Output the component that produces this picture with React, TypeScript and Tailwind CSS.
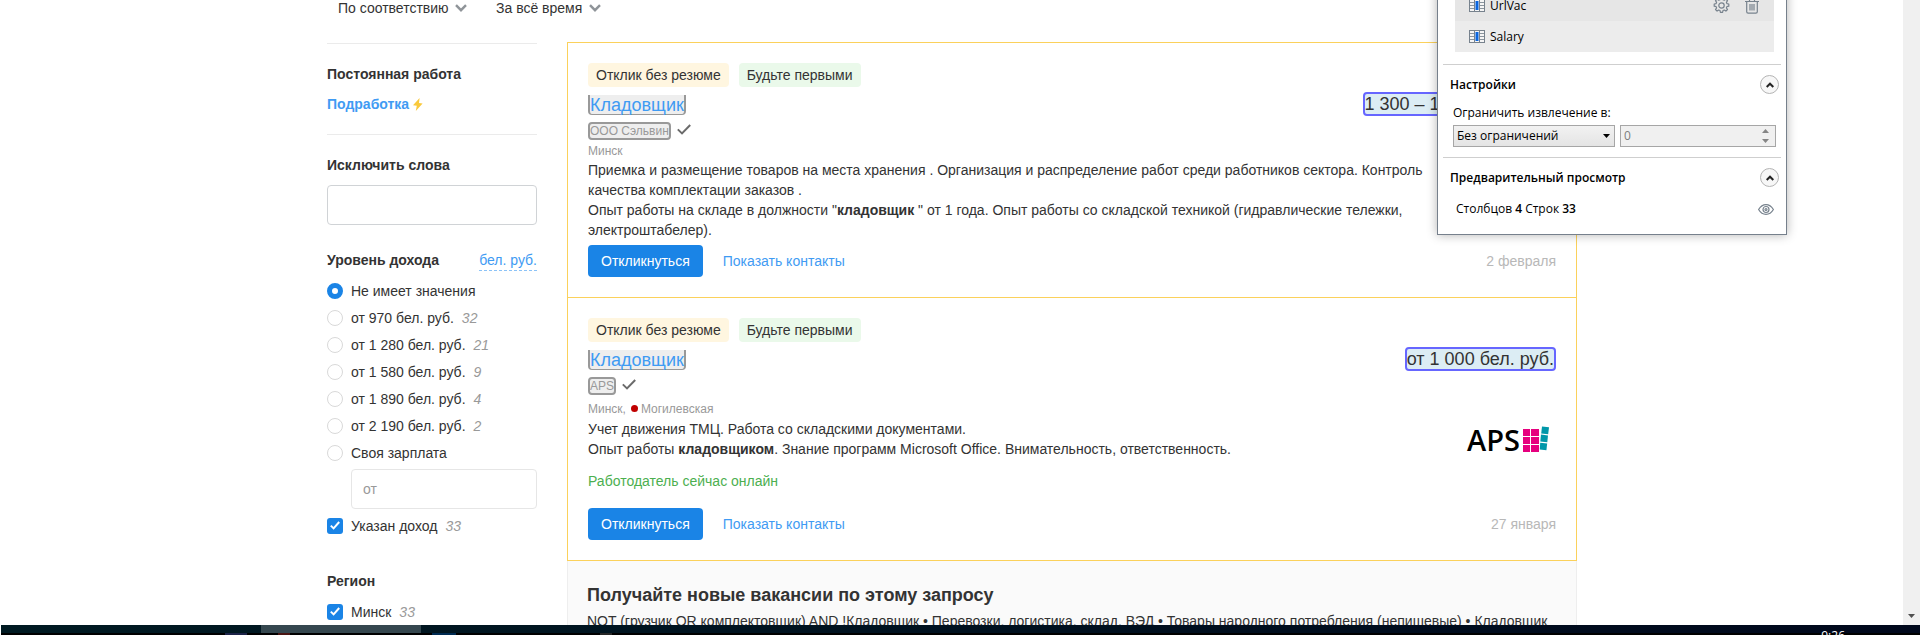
import type { ReactNode } from 'react';

const ARIAL = "font-['Liberation_Sans',Arial,sans-serif]";
const SEGOE = "font-['Open_Sans','Noto_Sans',sans-serif]";

function Chevron() {
  return (
    <svg width="12" height="8" viewBox="0 0 12 8" fill="none" stroke="#8f9499" strokeWidth="2.400" aria-hidden="true">
      <path d="M1 1.200 6 6.200 11 1.200" />
    </svg>
  );
}

function Sort({ label, value }: { label: string; value: string }) {
  return (
    <label className="flex h-4 items-center gap-1.5">
      <select aria-label={label} className="appearance-none bg-transparent p-0 text-sm leading-4 text-[#333]">
        <option>{value}</option>
      </select>
      <Chevron />
    </label>
  );
}

function RadioRow({ text, count, checked }: { text: string; count?: string; checked?: boolean }) {
  return (
    <label className="flex h-[27px] items-center">
      <input
        type="radio"
        name="income"
        defaultChecked={checked}
        className="mr-2 size-4 appearance-none rounded-full border border-[#d9d9d9] bg-white checked:border-[5px] checked:border-[#1a84e6]"
      />
      <span>{text}</span>
      {count && <i className="ml-2 text-[#999]">{count}</i>}
    </label>
  );
}

function CheckRow({ text, count }: { text: string; count: string }) {
  return (
    <label className="flex h-[27px] items-center">
      <span className="mr-2 grid size-4 place-items-center">
        <input type="checkbox" defaultChecked className="col-start-1 row-start-1 size-4 appearance-none rounded-[3px] bg-[#1a84e6]" />
        <svg className="pointer-events-none col-start-1 row-start-1" width="10" height="9" viewBox="0 0 10 9" fill="none" stroke="#fff" strokeWidth="2" aria-hidden="true">
          <path d="M.8 4.6 3.6 7.4 9.2 1" />
        </svg>
      </span>
      <span>{text}</span>
      <i className="ml-2 text-[#999]">{count}</i>
    </label>
  );
}

function Sidebar() {
  return (
    <aside className="mt-px w-[210px] shrink-0 border-t border-[#ebebeb] pt-5 text-sm text-[#333]">
      <h3 className="font-bold">Постоянная работа</h3>
      <a href="#part" className="mt-2.5 flex items-center gap-1 font-bold text-[#3f9bf3]">
        Подработка
        <svg width="10" height="13" viewBox="0 0 10 13" fill="#f9c93c" aria-hidden="true">
          <path d="M6.6 0 0 7.2l3.8.6L2.8 13 9.6 5.5 6 5z" />
        </svg>
      </a>
      <div className="mt-5 border-t border-[#ebebeb] pt-5">
        <label htmlFor="exclude" className="block font-bold">Исключить слова</label>
        <input id="exclude" type="text" className="mt-2.5 block h-10 w-full rounded border border-[#d0d3d6] px-3" />
      </div>
      <div className="mt-[25px] flex justify-between">
        <h3 className="font-bold">Уровень дохода</h3>
        <a href="#currency" className="border-b border-dashed border-[#8cc3f7] text-[#3f9bf3]">бел. руб.</a>
      </div>
      <div className="mt-1.5">
        <RadioRow text="Не имеет значения" checked />
        <RadioRow text="от 970 бел. руб." count="32" />
        <RadioRow text="от 1 280 бел. руб." count="21" />
        <RadioRow text="от 1 580 бел. руб." count="9" />
        <RadioRow text="от 1 890 бел. руб." count="4" />
        <RadioRow text="от 2 190 бел. руб." count="2" />
        <RadioRow text="Своя зарплата" />
      </div>
      <div className="my-[3px] pl-6">
        <input type="text" aria-label="Своя зарплата" placeholder="от" className="block h-10 w-full rounded border border-[#e6e6e6] px-[11px] placeholder:text-[#999]" />
      </div>
      <CheckRow text="Указан доход" count="33" />
      <h3 className="mt-8 mb-[7px] font-bold">Регион</h3>
      <CheckRow text="Минск" count="33" />
    </aside>
  );
}

type Job = {
  salary: string;
  company: string;
  place: ReactNode;
  text: ReactNode;
  date: string;
  logo?: ReactNode;
  online?: boolean;
  last?: boolean;
};

function JobCard({ salary, company, place, text, date, logo, online, last }: Job) {
  return (
    <article className={`border-x border-t border-[#fbd15b] px-5 py-5 ${last ? 'border-b' : ''}`}>
      <div className="flex gap-2.5">
        <span className="flex h-6 items-center rounded bg-[#fff6e0] px-2">Отклик без резюме</span>
        <span className="flex h-6 items-center rounded bg-[#eaf9ea] px-2">Будьте первыми</span>
      </div>
      <div className="mt-[5px] flex h-6 items-start justify-between text-lg">
        <a href="#job" className="mt-[3px] flex h-5 items-center rounded-b border-x-2 border-b border-[#999] bg-[#eee] leading-5 text-[#3f9bf3]">
          Кладовщик
        </a>
        <span className="flex h-6 items-center rounded border-2 border-[#6666ff] bg-[#dcedf4] leading-5">{salary}</span>
      </div>
      <div className="mt-1.5 flex h-[18px] items-center gap-1.5 text-xs">
        <a href="#company" className="flex h-[18px] items-center rounded border-2 border-[#999] bg-[#eee] text-[#999]">{company}</a>
        <svg width="14" height="11" viewBox="0 0 14 11" fill="none" stroke="#6b6b6b" strokeWidth="2" aria-label="Проверен" className="mb-1">
          <path d="M.8 5.4 5 9.4 13.2 1" />
        </svg>
      </div>
      {place}
      <div className="flex items-center justify-between">
        <p className="max-w-[860px]">{text}</p>
        {logo}
      </div>
      {online && <p className="mt-3 text-[#4caf50]">Работодатель сейчас онлайн</p>}
      <div className={`flex items-center gap-5 ${online ? 'mt-[17px]' : 'mt-[5px]'}`}>
        <button type="button" className="h-8 rounded bg-[#1a84e6] px-[13px] text-white">Откликнуться</button>
        <a href="#contacts" className="text-[#3f9bf3]">Показать контакты</a>
        <time className="ml-auto text-[#b8b8b8]">{date}</time>
      </div>
    </article>
  );
}

function ApsLogo() {
  return (
    <svg width="83" height="28" viewBox="0 0 83 28" className="mr-[7px] shrink-0" aria-label="APS">
      <text x="1" y="26" fontSize="29" className="font-['Open_Sans','Noto_Sans',sans-serif] font-semibold" fill="#000">APS</text>
      <g fill="#e6007e">
        <rect x="57" y="4" width="7" height="7" />
        <rect x="65" y="4" width="8" height="7" />
        <rect x="57" y="12" width="7" height="7" />
        <rect x="65" y="12" width="8" height="7" />
        <rect x="57" y="20" width="7" height="7" />
        <rect x="65" y="20" width="8" height="7" />
      </g>
      <g fill="#0097a9">
        <path d="M76 1.400 83 2.200 82.200 9.200 75.200 8.400z" />
        <path d="M75 9.600 82 10.400 81.300 17.200 74.300 16.400z" />
        <path d="M74.200 17.700 81.200 18.500 80.400 25.200 73.800 24.500z" />
      </g>
    </svg>
  );
}

function ColumnIcon() {
  return (
    <svg width="16" height="13" viewBox="0 0 16 13" aria-hidden="true">
      <rect x=".5" y=".5" width="15" height="12" fill="#f5f5f5" stroke="#77828d" />
      <path d="M5.500 0v13M10.500 0v13" stroke="#77828d" />
      <path d="M1 3.500h4M1 6.500h4M1 9.500h4M11 3.500h4M11 6.500h4M11 9.500h4" stroke="#8b959e" />
      <rect x="6.500" y="2" width="3" height="9" fill="#0a66e0" />
    </svg>
  );
}

function GearIcon() {
  return (
    <svg width="17" height="17" viewBox="0 0 17 17" fill="none" stroke="#77828d" aria-hidden="true">
      <circle cx="8.500" cy="8.500" r="2.700" strokeWidth="1.200" />
      <path
        strokeWidth="1.200"
        strokeLinejoin="round"
        d="M7.400.8h2.200l.4 1.900 1.300.5 1.600-1.100 1.600 1.600-1.100 1.600.5 1.300 1.900.4v2.200l-1.900.4-.5 1.300 1.100 1.600-1.600 1.600-1.600-1.100-1.300.5-.4 1.900H7.400L7 13.500 5.700 13l-1.600 1.100-1.600-1.600 1.100-1.600-.5-1.300-1.900-.4V7l1.900-.4.5-1.300-1.100-1.600 1.600-1.600 1.600 1.100L7 2.700z"
      />
    </svg>
  );
}

function TrashIcon() {
  return (
    <svg width="14" height="16" viewBox="0 0 14 16" fill="none" stroke="#77828d" strokeWidth="1.200" aria-hidden="true">
      <path d="M0 3.500h14M4.500 3V1h5v2M1.700 3.500v10.300q0 1.400 1.400 1.400h7.800q1.400 0 1.400-1.400V3.500M5 6v6.500M7 6v6.500M9 6v6.500" />
    </svg>
  );
}

function SectionHead({ title }: { title: string }) {
  return (
    <div className="mt-2.5 mr-[7px] ml-3 flex h-[19px] items-center justify-between">
      <h4 className="font-semibold">{title}</h4>
      <button type="button" aria-label={`Свернуть: ${title}`} className="flex size-[19px] items-center justify-center rounded-full border border-[#b4b4b4] bg-[#f7f7f7]">
        <svg width="8" height="6" viewBox="0 0 8 6" fill="none" stroke="#222" strokeWidth="2" aria-hidden="true">
          <path d="M.7 5 4 1.700 7.300 5" />
        </svg>
      </button>
    </div>
  );
}

function ExtractPanel() {
  return (
    <section className={`absolute -top-2.5 right-[133px] w-[350px] border-x border-b border-[#76808c] bg-white pb-[17px] text-xs leading-4 text-black shadow-[0_0_10px_rgba(0,0,0,0.3)] ${SEGOE}`}>
      <ul className="mr-3 ml-[17px]">
        <li className="flex h-[31px] items-center gap-[5px] bg-[#e6e6e6] pr-[15px] pl-3.5">
          <ColumnIcon />
          <span className="flex-1">UrlVac</span>
          <button type="button" aria-label="Настроить" className="mr-2.5"><GearIcon /></button>
          <button type="button" aria-label="Удалить"><TrashIcon /></button>
        </li>
        <li className="flex h-[31px] items-center gap-[5px] bg-[#ececec] pl-3.5">
          <ColumnIcon />
          <span>Salary</span>
        </li>
      </ul>
      <hr className="mx-[5px] mt-3 border-[#cfcfcf]" />
      <SectionHead title="Настройки" />
      <div className="mt-[11px] mr-2.5 ml-[15px]">
        <label htmlFor="limit" className="block">Ограничить извлечение в:</label>
        <div className="mt-1 flex gap-[5px]">
          <div className="grid w-[162px] items-center">
            <select id="limit" className="col-start-1 row-start-1 h-[22px] w-full appearance-none border border-[#a6a6a6] bg-gradient-to-b from-[#f2f2f2] to-[#e4e4e4] px-[3px]">
              <option>Без ограничений</option>
            </select>
            <svg className="pointer-events-none col-start-1 row-start-1 mr-[5px] justify-self-end" width="7" height="4" viewBox="0 0 7 4" aria-hidden="true">
              <path d="M0 0h7L3.500 4z" />
            </svg>
          </div>
          <div className="flex h-[22px] min-w-0 flex-1 items-center border border-[#a6a6a6] bg-[#f0f0f0] pr-1.5 pl-[3px]">
            <input type="text" inputMode="numeric" aria-label="Предел" defaultValue="0" disabled className="min-w-0 flex-1 text-[#7d7d7d]" />
            <svg width="7" height="14" viewBox="0 0 7 14" fill="#858585" aria-hidden="true">
              <path d="M0 4h7L3.500 0zM0 10h7l-3.500 4z" />
            </svg>
          </div>
        </div>
      </div>
      <hr className="mx-[5px] mt-2.5 border-[#cfcfcf]" />
      <SectionHead title="Предварительный просмотр" />
      <div className="mt-3.5 mr-3 ml-[18px] flex h-4 items-center justify-between">
        <p>
          Столбцов <b className="font-semibold">4</b> Строк <b className="font-semibold">33</b>
        </p>
        <button type="button" aria-label="Показать">
          <svg width="16" height="11" viewBox="0 0 16 11" fill="none" stroke="#77828d" strokeWidth="1.200" aria-hidden="true">
            <path d="M.6 5.500Q3.500.6 8 .6t7.400 4.900Q12.500 10.400 8 10.400T.6 5.500z" />
            <circle cx="8" cy="5.500" r="3" />
            <circle cx="8" cy="5.500" r="1" />
          </svg>
        </button>
      </div>
    </section>
  );
}

function Taskbar() {
  return (
    <footer className="ml-px grid h-2.5 shrink-0 overflow-hidden bg-gradient-to-r from-[#001a22] to-[#00081c]">
      <div className="col-start-1 row-start-1 h-2.5 overflow-hidden">
        <div className="ml-[260px] h-2 w-40 bg-[#35474f]" />
        <div className="flex h-0.5 bg-black">
          <span className="ml-56 w-[22px] bg-[#1c2348]" />
          <span className="ml-[31px] w-3 bg-[#4a1512]" />
          <span className="ml-[142px] w-6 bg-[#002b52]" />
          <span className="ml-36 w-3 bg-[#262626]" />
        </div>
      </div>
      <time className={`col-start-1 row-start-1 mt-[3px] mr-[75px] justify-self-end text-xs leading-4 text-white ${SEGOE}`}>9:26</time>
    </footer>
  );
}

export default function App() {
  return (
    <div className={`relative flex h-screen flex-col overflow-hidden bg-white text-sm leading-5 text-[#333] ${ARIAL}`}>
      <div className="flex min-h-0 flex-1">
        <div className="min-w-0 flex-1 overflow-hidden">
          <div className="mx-auto max-w-[1251px] pl-px">
            <div className="flex h-[42px] items-start gap-[29px] pl-[11px]">
              <Sort label="Сортировка" value="По соответствию" />
              <Sort label="Период" value="За всё время" />
            </div>
            <div className="flex items-start gap-[30px]">
              <Sidebar />
              <main className="min-w-0 flex-1">
                <JobCard
                  salary="1 300 – 1 500 бел. руб."
                  company="ООО Сэльвин"
                  place={<p className="h-5 text-xs leading-[22px] text-[#999]">Минск</p>}
                  text={
                    <>
                      Приемка и размещение товаров на места хранения . Организация и распределение работ среди работников сектора. Контроль качества комплектации заказов .
                      <br />
                      Опыт работы на складе в должности "<b>кладовщик</b> " от 1 года. Опыт работы со складской техникой (гидравлические тележки, электроштабелер).
                    </>
                  }
                  date="2 февраля"
                />
                <JobCard
                  salary="от 1 000 бел. руб."
                  company="APS"
                  place={
                    <p className="flex h-6 items-center pt-[3px] text-xs text-[#999]">
                      Минск,
                      <span className="mr-[3px] ml-[5px] size-[7px] rounded-full bg-[#c00000]" />
                      Могилевская
                    </p>
                  }
                  text={
                    <>
                      Учет движения ТМЦ. Работа со складскими документами.
                      <br />
                      Опыт работы <b>кладовщиком</b>. Знание программ Microsoft Office. Внимательность, ответственность.
                    </>
                  }
                  date="27 января"
                  logo={<ApsLogo />}
                  online
                  last
                />
                <section className="border-x border-[#eee] bg-[#fafafa] px-[19px] pt-[22px] pb-5">
                  <h2 className="text-lg leading-6 font-bold">Получайте новые вакансии по этому запросу</h2>
                  <p className="mt-1">
                    NOT (грузчик OR комплектовщик) AND !Кладовщик • Перевозки, логистика, склад, ВЭД • Товары народного потребления (непищевые) • Кладовщик
                  </p>
                </section>
              </main>
            </div>
          </div>
        </div>
        <div className="flex w-[17px] shrink-0 items-end justify-center bg-[#f0f0f0] pb-[7px]">
          <svg width="7" height="4" viewBox="0 0 7 4" fill="#505050" aria-hidden="true">
            <path d="M0 0h7L3.500 4z" />
          </svg>
        </div>
      </div>
      <Taskbar />
      <ExtractPanel />
    </div>
  );
}
